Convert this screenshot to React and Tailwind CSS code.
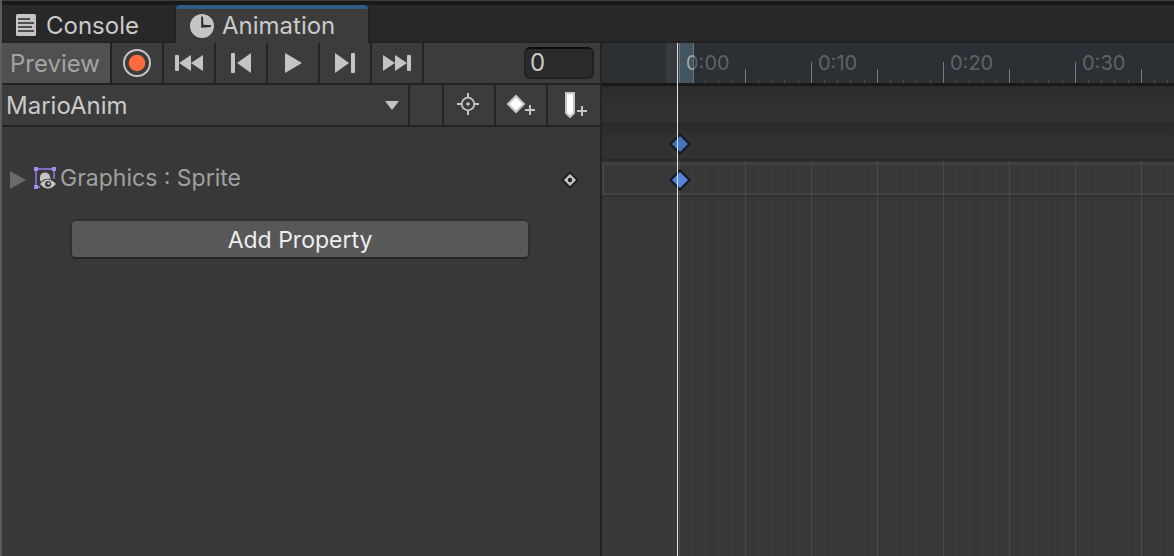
const FRAME_COUNT = 240;
const FRAME_STEP = 13.2;
const ORIGIN = 77;

const frames = Array.from({ length: FRAME_COUNT }, (_, i) => ({
  i,
  x: Math.floor(ORIGIN + i * FRAME_STEP + 0.3),
}));

const labels = [0, 10, 20, 30].map((f) => ({
  f,
  x: ORIGIN + 7 + f * FRAME_STEP,
  text: `0:${String(f).padStart(2, "0")}`,
}));

const toolButton =
  "flex h-10 w-[50px] shrink-0 items-center justify-center bg-[#3c3c3c] text-[#c4c4c4]";

function ConsoleIcon() {
  return (
    <svg width="20" height="22" viewBox="0 0 20 22" aria-hidden="true">
      <rect width="20" height="22" rx="1.5" fill="#c4c4c4" />
      <path d="M2 5h12M2 9h16M2 13h14M2 17h16" stroke="#282828" strokeWidth="1.7" />
    </svg>
  );
}

function ClockIcon() {
  return (
    <svg width="24" height="24" viewBox="0 0 24 24" aria-hidden="true">
      <circle cx="12" cy="12" r="12" fill="#c4c4c4" />
      <path d="M11.2 2.5h1.8l.3 8.2 7.7.6v1.6l-9.8.8z" fill="#2c2c2c" />
    </svg>
  );
}

function RecordIcon() {
  return (
    <svg width="28" height="28" viewBox="0 0 28 28" aria-hidden="true">
      <circle cx="14" cy="14" r="13" fill="none" stroke="#c4c4c4" strokeWidth="2" />
      <circle cx="14" cy="14" r="8.3" fill="#ff6b3d" />
    </svg>
  );
}

function FirstIcon() {
  return (
    <svg width="28" height="18" viewBox="0 0 28 18" fill="currentColor" aria-hidden="true">
      <rect x="0" y="1" width="4" height="16" rx="1" />
      <path d="M16 1v16L4 9zM28 1v16L16 9z" />
    </svg>
  );
}

function PreviousIcon() {
  return (
    <svg width="20" height="20" viewBox="0 0 20 20" fill="currentColor" aria-hidden="true">
      <rect x="0" y="0" width="4" height="20" rx="1" />
      <path d="M20 0v20L6 10z" />
    </svg>
  );
}

function PlayIcon() {
  return (
    <svg width="18" height="20" viewBox="0 0 18 20" fill="currentColor" aria-hidden="true">
      <path d="M1 0v20L18 10z" />
    </svg>
  );
}

function Diamond({ fill }) {
  return (
    <svg width="22" height="22" viewBox="0 0 22 22" className="block" aria-hidden="true">
      <path d="M11 1.5 20.5 11 11 20.5 1.5 11z" fill={fill} stroke="#131c2b" strokeWidth="2.2" />
    </svg>
  );
}

function SpriteIcon() {
  return (
    <svg width="22" height="22" viewBox="0 0 22 22" className="block" aria-hidden="true">
      <path d="M2 20V2h18v10M2 20h4" fill="none" stroke="#9a7ff0" strokeWidth="1.4" />
      <path d="M0 0h4v4H0zM18 0h4v4h-4zM0 18h4v4H0z" fill="#a98bf5" />
      <path d="M6 13V10a5 4.5 0 0 1 10 0l1 2q-7-1-10 3z" fill="#c4c4c4" />
      <path d="M6 17q8-9 16 0-8 9-16 0z" fill="#c4c4c4" />
      <circle cx="14" cy="17" r="3" fill="#383838" />
      <circle cx="14.5" cy="16.5" r="1.2" fill="#c4c4c4" />
    </svg>
  );
}

function Tabs() {
  return (
    <div role="tablist" className="flex h-[38px] bg-[#282828]">
      <button
        type="button"
        role="tab"
        aria-selected="false"
        className="flex w-[174px] items-center gap-2.5 border-t-4 border-r-2 border-b-2 border-[#232323] border-t-transparent pl-3.5 text-2xl text-[#cacaca]"
      >
        <ConsoleIcon />
        <span className="pt-0.5">Console</span>
      </button>
      <button
        type="button"
        role="tab"
        aria-selected="true"
        className="flex w-48 items-center gap-2 rounded-t-sm border-t-4 border-[#2c5d87] bg-[#3c3c3c] pl-3.5 text-2xl text-[#cacaca]"
      >
        <ClockIcon />
        Animation
      </button>
      <div className="flex-1 border-b-2 border-l-2 border-[#232323]" />
    </div>
  );
}

function Playback() {
  return (
    <div className="flex gap-0.5 bg-[#232323] pb-0.5">
      <button type="button" className="h-10 w-[108px] shrink-0 bg-[#505050] pt-0.5 pr-0.5 text-2xl text-[#a4a4a4]">
        Preview
      </button>
      <button type="button" aria-label="Record" className={toolButton}><RecordIcon /></button>
      <button type="button" aria-label="First keyframe" className={toolButton}><FirstIcon /></button>
      <button type="button" aria-label="Previous keyframe" className={toolButton}><PreviousIcon /></button>
      <button type="button" aria-label="Play" className={toolButton}><PlayIcon /></button>
      <button type="button" aria-label="Next keyframe" className={toolButton}>
        <span className="rotate-180"><PreviousIcon /></span>
      </button>
      <button type="button" aria-label="Last keyframe" className={toolButton}>
        <span className="rotate-180"><FirstIcon /></span>
      </button>
      <div className="flex flex-1 items-center justify-end bg-[#3c3c3c] pr-1.5">
        <input
          aria-label="Current frame"
          defaultValue="0"
          className="h-8 w-[70px] rounded-md border-2 border-[#212121] border-t-[#0d0d0d] bg-[#2a2a2a] px-1 text-2xl text-[#cacaca] outline-none"
        />
      </div>
    </div>
  );
}

function ClipBar() {
  return (
    <div className="flex gap-0.5 bg-[#232323] pb-0.5">
      <div className="relative flex-1 bg-[#3c3c3c]">
        <select
          aria-label="Animation clip"
          className="h-10 w-full appearance-none bg-transparent pt-0.5 pl-1 text-2xl text-[#cacaca] outline-none"
        >
          <option>MarioAnim</option>
        </select>
        <svg width="14" height="9" viewBox="0 0 14 9" className="pointer-events-none absolute top-4 right-[9px]" aria-hidden="true">
          <path d="M0 0h14L7 9z" fill="#c4c4c4" />
        </svg>
      </div>
      <div className="h-10 w-8 shrink-0 bg-[#3c3c3c]" />
      <button type="button" aria-label="Filter by selection" className={`${toolButton} pr-0.5 pb-0.5`}>
        <svg width="22" height="22" viewBox="0 0 22 22" fill="none" stroke="currentColor" aria-hidden="true">
          <circle cx="11" cy="11" r="6.3" strokeWidth="1.8" />
          <path d="M11 0v5M11 17v5M0 11h5M17 11h5" strokeWidth="2" />
          <circle cx="11" cy="11" r="1.8" fill="currentColor" stroke="none" />
        </svg>
      </button>
      <button type="button" aria-label="Add keyframe" className={toolButton}>
        <svg width="28" height="22" viewBox="0 0 28 22" aria-hidden="true">
          <path d="M9 2 17 10 9 18 1 10z" fill="#fff" stroke="#c4c4c4" strokeWidth="2" />
          <path d="M23 11v10M18 16h10" stroke="#c4c4c4" strokeWidth="2" />
        </svg>
      </button>
      <button
        type="button"
        aria-label="Add event"
        className="flex h-10 w-[52px] shrink-0 items-center justify-center bg-[#3c3c3c] pl-1 text-[#c4c4c4]"
      >
        <svg width="22" height="26" viewBox="0 0 22 26" aria-hidden="true">
          <path d="M1 1h8v20l-4 4-4-4z" fill="#fff" stroke="#c4c4c4" strokeWidth="2" />
          <path d="M17 14v10M12 19h10" stroke="#c4c4c4" strokeWidth="2" />
        </svg>
      </button>
    </div>
  );
}

function Hierarchy() {
  return (
    <div className="flex-1 pt-8">
      <div className="flex h-9 items-center pr-[21px] pl-2 text-[23px] text-[#a0a0a0]">
        <button type="button" aria-label="Expand Graphics" className="pt-1.5">
          <svg width="16" height="18" viewBox="0 0 16 18" className="block" aria-hidden="true">
            <path d="M0 0v18L16 9z" fill="#6a6a6a" />
          </svg>
        </button>
        <span className="ml-2 pt-0.5"><SpriteIcon /></span>
        <span className="ml-1 flex-1 pt-0.5">Graphics : Sprite</span>
        <button type="button" aria-label="Keyframe options" className="pt-1.5">
          <svg width="18" height="18" viewBox="0 0 18 18" className="block" aria-hidden="true">
            <path d="M9 1.5 16.5 9 9 16.5 1.5 9z" fill="#c4c4c4" stroke="#202020" strokeWidth="2" />
            <circle cx="9" cy="9" r="2.2" fill="#202020" />
          </svg>
        </button>
      </div>
      <div className="pt-6 pr-[70px] pl-[68px]">
        <button
          type="button"
          className="h-10 w-full rounded-md border-2 border-[#303030] border-b-[#242424] bg-[#585858] pt-0.5 text-[23px] text-[#eeeeee]"
        >
          Add Property
        </button>
      </div>
    </div>
  );
}

function Timeline() {
  return (
    <div className="relative flex min-w-0 flex-1 flex-col overflow-hidden bg-[#383838]">
      <div className="relative h-10 overflow-hidden bg-[#2b3034]">
        <div className="absolute top-0 left-16 h-10 w-[13px] bg-[#373b3f]" />
        <div className="absolute top-0 left-[77px] h-10 w-[15px] border-x border-[#6b7679] bg-[#425560]" />
        <svg className="absolute inset-0 h-full w-full" aria-hidden="true">
          {frames.slice(2).map(({ i, x }) => {
            const h = i % 10 === 0 ? 21 : i % 5 === 0 ? 14 : 3;
            return (
              <rect key={i} x={x} y={40 - h} width="1" height={h} fill={i % 5 === 0 ? "#777b7d" : "#4b5053"} />
            );
          })}
        </svg>
        {labels.map(({ f, x, text }) => (
          <span
            key={f}
            style={{ left: Math.round(x) }}
            className={
              f === 0
                ? "absolute top-1.5 bg-linear-to-r from-[#a0a8ab] from-[8px] to-[#5f6366] to-[8px] bg-clip-text text-xl text-transparent"
                : "absolute top-1.5 text-xl text-[#5f6366]"
            }
          >
            {text}
          </span>
        ))}
      </div>
      <div className="h-[3px] bg-[#191919]" />
      <div className="h-[37px] bg-linear-to-b from-[#2b2b2b] to-[#313131] to-50%" />
      <div className="h-9 bg-linear-to-b from-[#292929] to-[#313131] to-50%" />
      <div className="h-0.5 bg-[#282828]" />
      <div className="relative flex-1 pt-0.5">
        <div className="h-8 border-2 border-r-0 border-[#444444]" />
        <div className="h-0.5 bg-[#303030]" />
        <svg className="absolute inset-0 h-full w-full" aria-hidden="true">
          {frames.map(({ i, x }) => (
            <rect key={i} x={x} y="0" width="1" height="100%" fill={i % 5 === 0 ? "#4a4a4a" : "#3d3d3d"} />
          ))}
        </svg>
      </div>
      <div className="absolute top-[90px] left-[67px]"><Diamond fill="#4772b9" /></div>
      <div className="absolute top-[126px] left-[67px]"><Diamond fill="#5686dc" /></div>
      <div className="absolute inset-y-0 left-[75px] w-px bg-[#e4e4e4]" />
    </div>
  );
}

export default function App() {
  return (
    <div className="flex min-h-screen flex-col border-l-2 border-[#5c5c5c] bg-[#383838] font-['Inter',sans-serif]">
      <div className="h-[5px] border-t border-[#3f3f3f] bg-[#191919]" />
      <Tabs />
      <main className="flex flex-1">
        <section className="flex w-[600px] shrink-0 flex-col border-r-2 border-[#232323]">
          <Playback />
          <ClipBar />
          <Hierarchy />
        </section>
        <Timeline />
      </main>
    </div>
  );
}
